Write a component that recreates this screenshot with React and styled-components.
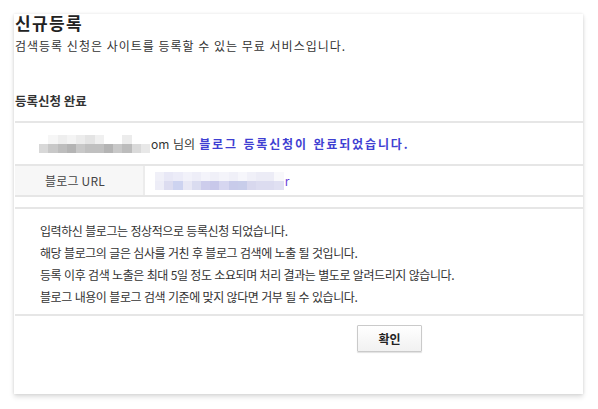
import React from "react";
import styled, { createGlobalStyle } from "styled-components";

const Global = createGlobalStyle`
  html, body { margin: 0; padding: 0; background: #fff; }
  body { font-family: "Noto Sans CJK KR", "Noto Sans", sans-serif; color: #333; }
  * { box-sizing: border-box; }
`;

const Page = styled.div`
  width: 598px;
  height: 409px;
  overflow: hidden;
  padding: 14px 15px 0 14px;
`;

const Card = styled.div`
  background: #fff;
  height: 380px;
  padding-left: 1px;
  box-shadow: 0 3px 5px rgba(0, 0, 0, 0.13), 0 0 3px rgba(0, 0, 0, 0.1);
  display: flex;
  flex-direction: column;
`;

const Title = styled.h1`
  margin: -1px 0 0;
  font-size: 17px;
  line-height: 20px;
  font-weight: 700;
  color: #222;
  letter-spacing: 1.4px;
`;

const Subtitle = styled.p`
  margin: 5px 0 0;
  font-size: 12px;
  line-height: 16px;
  color: #333;
  letter-spacing: 1px;
`;

const SectionTitle = styled.h2`
  margin: 39px 0 0;
  font-size: 12.5px;
  line-height: 16px;
  font-weight: 700;
  color: #333;
`;

const Table = styled.div`
  margin-top: 12px;
  border-top: 2px solid #e6e6e6;
  border-bottom: 2px solid #e6e6e6;
`;

const Row = styled.div`
  display: flex;
  align-items: center;
  height: ${(p) => p.$h}px;
  & + & {
    border-top: 2px solid #e6e6e6;
  }
`;

const Message = styled.div`
  display: flex;
  align-items: center;
  padding-left: 24px;
  font-size: 12px;
  color: #333;
  word-spacing: 1px;
`;

const Blue = styled.strong`
  color: #3f3fd2;
  font-weight: 700;
  letter-spacing: 1.85px;
  margin-left: 4px;
`;

const Label = styled.div`
  width: 130px;
  height: 100%;
  background: #f7f7f7;
  border-right: 2px solid #ececec;
  display: flex;
  align-items: center;
  padding-left: 30px;
  font-size: 12px;
  color: #444;
  letter-spacing: 0.2px;
`;

const Value = styled.div`
  display: flex;
  align-items: center;
  padding-left: 10px;
  font-size: 12px;
  color: #6a3fd8;
`;

const Mosaic = styled.div`
  display: grid;
  grid-template-columns: repeat(${(p) => p.$cols}, ${(p) => p.$cw}px);
  grid-auto-rows: 9px;
  margin-right: ${(p) => p.$mr || 0}px;
`;

const Cell = styled.span`
  background: ${(p) => p.$c};
`;

const Notice = styled.div`
  margin-top: 10px;
  border-top: 2px solid #e6e6e6;
  border-bottom: 2px solid #e6e6e6;
  padding: 11px 0 6px 25px;
`;

const NoticeLine = styled.p`
  margin: 0;
  font-size: 12px;
  line-height: 22px;
  color: #333;
  letter-spacing: -0.42px;
  word-spacing: 0.5px;
`;

const Actions = styled.div`
  display: flex;
  padding: 9px 0 0 342px;
`;

const Button = styled.button`
  width: 65px;
  height: 27px;
  border: 1px solid #cacaca;
  border-radius: 1px;
  background: linear-gradient(#ffffff, #f1f1f1);
  box-shadow: 0 1px 1px rgba(0, 0, 0, 0.12);
  font-family: inherit;
  font-size: 12px;
  font-weight: 700;
  color: #222;
  padding: 0;
`;

const nameTop = ["#fff", "#f6f6f6", "#eee", "#f4f4f4", "#ececec", "#e4e4e4", "#f0f0f0", "#fff", "#fff", "#ececec", "#fff", "#fff"];
const nameBottom = ["#d8d8d8", "#c8c8c8", "#bdbdbd", "#b4b4b4", "#c8c8c8", "#c0c0c0", "#c0c0c0", "#b4b4b4", "#c8c8c8", "#bcbcbc", "#dadada", "#e8e8e8"];
const urlTop = ["#f0f0f8", "#e8e8f6", "#ececf8", "#f2f2fa", "#eeeef8", "#f4f4fb", "#f0f0f8", "#f4f4fa", "#f0f0f8", "#f6f6fb", "#f0f0f8", "#ececf6", "#ececf6", "#f8f8fb"];
const urlBottom = ["#ededf7", "#dcdcf0", "#cdd3f0", "#e8e8f5", "#dadcf0", "#cdcdec", "#c8c8ea", "#d6d6f0", "#c8cbea", "#c8cdea", "#d8d8ee", "#dcdcf0", "#dcdcf0", "#e0e0f2"];

function Blur({ top, bottom, cw, mr }) {
  return (
    <Mosaic $cols={top.length} $cw={cw} $mr={mr}>
      {top.map((c, i) => (
        <Cell key={"t" + i} $c={c} />
      ))}
      {bottom.map((c, i) => (
        <Cell key={"b" + i} $c={c} />
      ))}
    </Mosaic>
  );
}

export default function App() {
  return (
    <>
      <Global />
      <Page>
        <Card>
          <Title>신규등록</Title>
          <Subtitle>검색등록 신청은 사이트를 등록할 수 있는 무료 서비스입니다.</Subtitle>
          <SectionTitle>등록신청 완료</SectionTitle>
          <Table>
            <Row $h={41}>
              <Message>
                <Blur top={nameTop} bottom={nameBottom} cw={9.25} mr={1} />
                om 님의<Blue>블로그 등록신청이 완료되었습니다.</Blue>
              </Message>
            </Row>
            <Row $h={31}>
              <Label>블로그 URL</Label>
              <Value>
                <Blur top={urlTop} bottom={urlBottom} cw={9.2} mr={1} />r
              </Value>
            </Row>
          </Table>
          <Notice>
            <NoticeLine>입력하신 블로그는 정상적으로 등록신청 되었습니다.</NoticeLine>
            <NoticeLine>해당 블로그의 글은 심사를 거친 후 블로그 검색에 노출 될 것입니다.</NoticeLine>
            <NoticeLine>등록 이후 검색 노출은 최대 5일 정도 소요되며 처리 결과는 별도로 알려드리지 않습니다.</NoticeLine>
            <NoticeLine>블로그 내용이 블로그 검색 기준에 맞지 않다면 거부 될 수 있습니다.</NoticeLine>
          </Notice>
          <Actions>
            <Button>확인</Button>
          </Actions>
        </Card>
      </Page>
    </>
  );
}
